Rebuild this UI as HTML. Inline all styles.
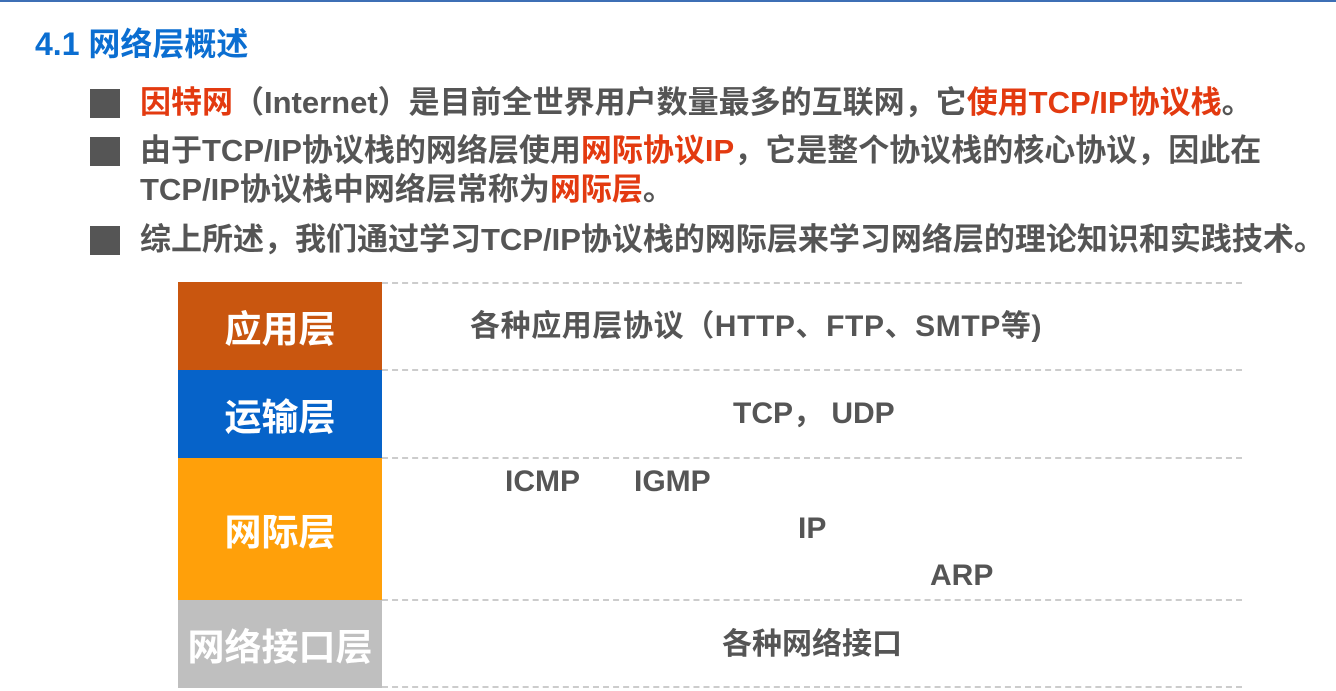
<!DOCTYPE html>
<html><head><meta charset="utf-8"><style>
body{margin:0;width:1336px;height:691px;background:#fff;position:relative;overflow:hidden;font-family:"Liberation Sans","Noto Sans CJK SC",sans-serif;font-weight:bold}
.a{position:absolute;white-space:nowrap}
.t{color:#555;font-size:31px;line-height:32px;left:140px}
.r{color:#e33a10}
.sq{position:absolute;left:90px;width:30px;height:29px;background:#555}
.blk{position:absolute;left:178px;width:204px;color:#fff;font-size:37px;display:flex;align-items:center;justify-content:center}
.d{position:absolute;left:382px;width:860px;border-top:2px dashed #ccc}
.c{color:#555;font-size:30px;line-height:30px}
</style></head><body>
<div class="a" style="left:0;top:0;width:1336px;height:2px;background:#3d6fb5"></div>
<div class="a" style="left:35px;top:27px;font-size:32px;line-height:34px;color:#0b6ed1">4.1 网络层概述</div>
<div class="sq" style="top:89px"></div>
<div class="sq" style="top:137px"></div>
<div class="sq" style="top:226px"></div>
<div class="a t" style="top:87px"><span class="r">因特网</span>（Internet）是目前全世界用户数量最多的互联网，它<span class="r">使用TCP/IP协议栈</span>。</div>
<div class="a t" style="top:135px">由于TCP/IP协议栈的网络层使用<span class="r">网际协议IP</span>，它是整个协议栈的核心协议，因此在</div>
<div class="a t" style="top:174px">TCP/IP协议栈中网络层常称为<span class="r">网际层</span>。</div>
<div class="a t" style="top:224px">综上所述，我们通过学习TCP/IP协议栈的网际层来学习网络层的理论知识和实践技术。</div>
<div class="blk" style="top:282px;height:88px;background:#c9560f">应用层</div>
<div class="blk" style="top:370px;height:88px;background:#0663c9">运输层</div>
<div class="blk" style="top:458px;height:142px;background:#ffa00a">网际层</div>
<div class="blk" style="top:600px;height:88px;background:#bfbfbf">网络接口层</div>
<div class="d" style="top:282px"></div>
<div class="d" style="top:369px"></div>
<div class="d" style="top:457px"></div>
<div class="d" style="top:599px"></div>
<div class="d" style="top:686px"></div>
<div class="a c" style="left:470px;top:312px;letter-spacing:0.6px">各种应用层协议（HTTP、FTP、SMTP等)</div>
<div class="a c" style="left:733px;top:399px">TCP， UDP</div>
<div class="a c" style="left:505px;top:467px">ICMP</div>
<div class="a c" style="left:634px;top:467px">IGMP</div>
<div class="a c" style="left:798px;top:514px">IP</div>
<div class="a c" style="left:930px;top:561px">ARP</div>
<div class="a c" style="left:722px;top:630px">各种网络接口</div>
</body></html>
